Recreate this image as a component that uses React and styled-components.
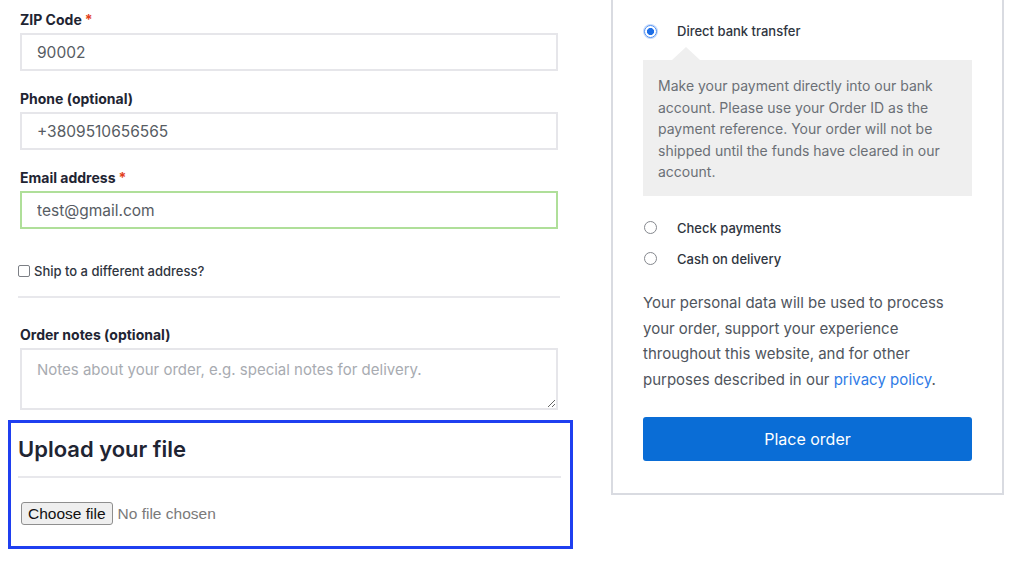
import React from 'react';
import styled, { createGlobalStyle } from 'styled-components';

const GlobalStyle = createGlobalStyle`
  body {
    margin: 0;
    background: #ffffff;
    font-family: Inter, "Noto Sans", sans-serif;
    overflow: hidden;
  }
`;

const Page = styled.div`
  display: flex;
  align-items: flex-start;
  width: 1024px;
  height: 566px;
`;

const LeftCol = styled.div`
  width: 565px;
  margin-left: 8px;
  padding-top: 10px;
  display: flex;
  flex-direction: column;
`;

const Field = styled.div`
  display: flex;
  flex-direction: column;
  gap: 3px;
  padding: 0 15px 0 12px;
  margin-bottom: ${(p) => p.$mb ?? 18}px;
`;

const Label = styled.label`
  font-size: 14px;
  line-height: 20px;
  font-weight: 650;
  color: #1f2533;
`;

const Required = styled.span`
  color: #e2401c;
  margin-left: 3px;
`;

const Input = styled.input`
  box-sizing: border-box;
  width: 538px;
  height: 38px;
  padding: 0 15px;
  border: 2px solid ${(p) => (p.$valid ? '#afdf99' : '#e6e6ea')};
  background: #fff;
  font-family: inherit;
  font-size: 15.5px;
  color: #575c63;
  outline: none;
`;

const TextArea = styled.textarea`
  box-sizing: border-box;
  width: 538px;
  height: 62px;
  padding: 9px 15px;
  border: 2px solid #e6e6ea;
  font-family: inherit;
  font-size: 15px;
  line-height: 22px;
  color: #4f545b;
  outline: none;
  &::placeholder {
    color: #a8abb1;
  }
`;

const CheckRow = styled.label`
  display: flex;
  align-items: center;
  gap: 4px;
  margin: 33px 0 0 10px;
  font-size: 13px;
  line-height: 18px;
  font-weight: 500;
  color: #2f3540;
`;

const Checkbox = styled.input`
  appearance: none;
  margin: 0;
  width: 12px;
  height: 12px;
  border: 1px solid #7c7f85;
  border-radius: 2px;
  background: #fff;
`;

const Rule = styled.hr`
  border: none;
  height: 2px;
  background: #e8e8ec;
  margin: ${(p) => p.$m || '16px 13px 27px 10px'};
`;

const UploadBox = styled.section`
  box-sizing: border-box;
  margin-top: 10px;
  height: 129px;
  border: 3px solid #1f3ff0;
  padding: 13px 9px 0 7px;
`;

const UploadTitle = styled.h2`
  margin: 0;
  font-size: 22px;
  line-height: 26px;
  font-weight: 600;
  color: #1f2533;
`;

const FileRow = styled.label`
  display: flex;
  align-items: center;
  gap: 5px;
  margin-left: 3px;
  font-family: "Liberation Sans", Arial, sans-serif;
  font-size: 15.5px;
`;

const FileButton = styled.span`
  box-sizing: border-box;
  height: 23px;
  padding: 0 6px;
  display: flex;
  align-items: center;
  background: #efefef;
  border: 1px solid #8f8f8f;
  border-radius: 3px;
  color: #111;
`;

const FileName = styled.span`
  color: #7a7a7a;
`;

const HiddenFile = styled.input`
  display: none;
`;

const Panel = styled.aside`
  box-sizing: border-box;
  width: 393px;
  margin: -2px 0 0 38px;
  height: 497px;
  border: 2px solid #d9dbe1;
  padding: 21px 30px 0 30px;
  display: flex;
  flex-direction: column;
`;

const MethodRow = styled.label`
  display: flex;
  align-items: center;
  height: 20px;
  margin-bottom: ${(p) => p.$mb ?? 0}px;
  font-size: 13px;
  font-weight: 500;
  color: #2f3540;
`;

const Radio = styled.input`
  appearance: none;
  margin: 0 20px 0 1px;
  width: 13px;
  height: 13px;
  border-radius: 50%;
  border: 1px solid #85888e;
  background: #fff;
  &:checked {
    border-color: #4d8ef2;
    background: radial-gradient(circle, #1f6fe6 0 3.3px, #ffffff 3.8px);
    box-shadow: 0 0 0 1px #c5dafb;
  }
`;

const MethodBox = styled.div`
  position: relative;
  margin: 19px 0 22px;
  background: #efefef;
  padding: 15px 8px 13px 15px;
  font-size: 14px;
  line-height: 21.6px;
  color: #6b6f76;
  white-space: nowrap;
  &::before {
    content: '';
    position: absolute;
    top: -13px;
    left: 29px;
    border: 14px solid transparent;
    border-top: none;
    border-bottom: 13px solid #efefef;
  }
`;

const Privacy = styled.p`
  margin: 21px 0 24px;
  font-size: 15px;
  line-height: 25.7px;
  color: #4f555d;
  white-space: nowrap;
`;

const PrivacyLink = styled.a`
  color: #2f7be6;
  text-decoration: none;
`;

const PlaceButton = styled.button`
  height: 44px;
  border: none;
  border-radius: 3px;
  background: #0a6dd6;
  color: #fff;
  font-family: inherit;
  font-size: 16px;
  font-weight: 400;
`;

const fields = [
  { label: 'ZIP Code', required: true, value: '90002' },
  { label: 'Phone (optional)', value: '+3809510656565' },
  { label: 'Email address', required: true, value: 'test@gmail.com', valid: true },
];

export default function App() {
  return (
    <>
      <GlobalStyle />
      <Page>
        <LeftCol>
          {fields.map((f) => (
            <Field key={f.label} $mb={f.valid ? 0 : 18}>
              <Label>
                {f.label}
                {f.required && <Required>*</Required>}
              </Label>
              <Input defaultValue={f.value} $valid={f.valid} />
            </Field>
          ))}
          <CheckRow>
            <Checkbox type="checkbox" />
            Ship to a different address?
          </CheckRow>
          <Rule />
          <Field $mb={0}>
            <Label>Order notes (optional)</Label>
            <TextArea placeholder="Notes about your order, e.g. special notes for delivery." />
          </Field>
          <UploadBox>
            <UploadTitle>Upload your file</UploadTitle>
            <Rule $m="14px 0 24px 0" />
            <FileRow>
              <HiddenFile type="file" />
              <FileButton>Choose file</FileButton>
              <FileName>No file chosen</FileName>
            </FileRow>
          </UploadBox>
        </LeftCol>
        <Panel>
          <MethodRow>
            <Radio type="radio" name="pay" defaultChecked />
            Direct bank transfer
          </MethodRow>
          <MethodBox>
            Make your payment directly into our bank
            <br />
            account. Please use your Order ID as the
            <br />
            payment reference. Your order will not be
            <br />
            shipped until the funds have cleared in our
            <br />
            account.
          </MethodBox>
          <MethodRow $mb={11}>
            <Radio type="radio" name="pay" />
            Check payments
          </MethodRow>
          <MethodRow>
            <Radio type="radio" name="pay" />
            Cash on delivery
          </MethodRow>
          <Privacy>
            Your personal data will be used to process
            <br />
            your order, support your experience
            <br />
            throughout this website, and for other
            <br />
            purposes described in our <PrivacyLink href="#">privacy policy</PrivacyLink>.
          </Privacy>
          <PlaceButton>Place order</PlaceButton>
        </Panel>
      </Page>
    </>
  );
}
